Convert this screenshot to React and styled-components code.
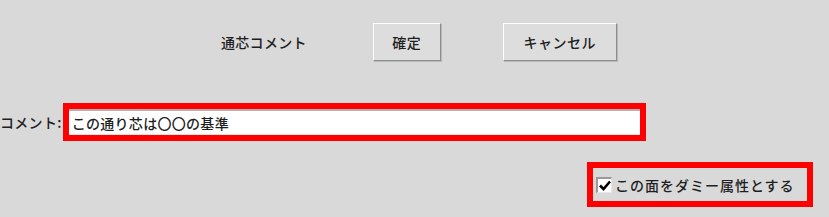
import React from "react";
import styled, { createGlobalStyle } from "styled-components";

const Global = createGlobalStyle`
  html, body { margin: 0; padding: 0; background: #d9d9d9; }
  body {
    font-family: "Noto Sans CJK JP", "Noto Sans", sans-serif;
    color: #1e1e1e;
    overflow: hidden;
  }
`;

const Panel = styled.div`
  width: 829px;
  height: 217px;
  background: #d9d9d9;
  display: flex;
  flex-direction: column;
`;

const TopRow = styled.div`
  display: flex;
  align-items: center;
  height: 38px;
  margin-top: 23px;
  padding-left: 221px;
`;

const Label = styled.span`
  font-size: 14px;
  font-weight: 500;
  line-height: 1;
  letter-spacing: 0.3px;
  white-space: nowrap;
  margin-right: ${(p) => p.$gap || 0}px;
`;

const Button = styled.button`
  box-sizing: border-box;
  width: ${(p) => p.$w}px;
  height: 38px;
  margin-right: ${(p) => p.$gap || 0}px;
  background: #dddddd;
  border: 1px solid;
  border-color: #ffffff #8e8e8e #8e8e8e #ffffff;
  box-shadow: 1px 1px 0 #b8b8b8;
  font-family: "Noto Sans CJK JP", "Noto Sans", sans-serif;
  font-size: 14px;
  font-weight: 500;
  color: #1e1e1e;
  padding: 0;
  letter-spacing: 0.5px;
`;

const CommentRow = styled.div`
  display: flex;
  align-items: center;
  margin-top: 42px;
`;

const Highlight = styled.div`
  box-sizing: border-box;
  border: 6px solid #ff0000;
  width: ${(p) => p.$w}px;
  height: ${(p) => p.$h}px;
  display: flex;
  align-items: center;
`;

const TextField = styled.div`
  box-sizing: border-box;
  flex: 1;
  height: 100%;
  background: #ffffff;
  border-top: 2px solid #b0b0b0;
  border-bottom: 1px solid #e6e6e6;
  display: flex;
  align-items: center;
  padding-left: 3px;
  font-size: 14px;
  font-weight: 500;
  letter-spacing: 0.3px;
`;

const CheckRow = styled.div`
  display: flex;
  justify-content: flex-start;
  margin-top: 21px;
  padding-left: 587px;
`;

const CheckLabel = styled.label`
  display: flex;
  align-items: center;
  gap: 3px;
  padding-left: 3px;
  font-size: 14px;
  font-weight: 500;
  letter-spacing: 1px;
  white-space: nowrap;
`;

const Box = styled.span`
  box-sizing: border-box;
  width: 16px;
  height: 16px;
  background: #ffffff;
  border-top: 2px solid #9a9a9a;
  border-left: 2px solid #9a9a9a;
  border-bottom: 1px solid #e8e8e8;
  border-right: 1px solid #e8e8e8;
  display: flex;
  align-items: center;
  justify-content: center;
`;

export default function App() {
  return (
    <>
      <Global />
      <Panel>
        <TopRow>
          <Label $gap={66}>通芯コメント</Label>
          <Button $w={68} $gap={62}>確定</Button>
          <Button $w={114}>キャンセル</Button>
        </TopRow>
        <CommentRow>
          <Label $gap={1}>コメント:</Label>
          <Highlight $w={583} $h={38}>
            <TextField>この通り芯は〇〇の基準</TextField>
          </Highlight>
        </CommentRow>
        <CheckRow>
          <Highlight $w={226} $h={45}>
            <CheckLabel>
              <Box>
                <svg width="12" height="11" viewBox="0 0 12 11">
                  <path d="M1 5.5 L4.5 9 L11 1.5" fill="none" stroke="#000" strokeWidth="2.6" />
                </svg>
              </Box>
              この面をダミー属性とする
            </CheckLabel>
          </Highlight>
        </CheckRow>
      </Panel>
    </>
  );
}
